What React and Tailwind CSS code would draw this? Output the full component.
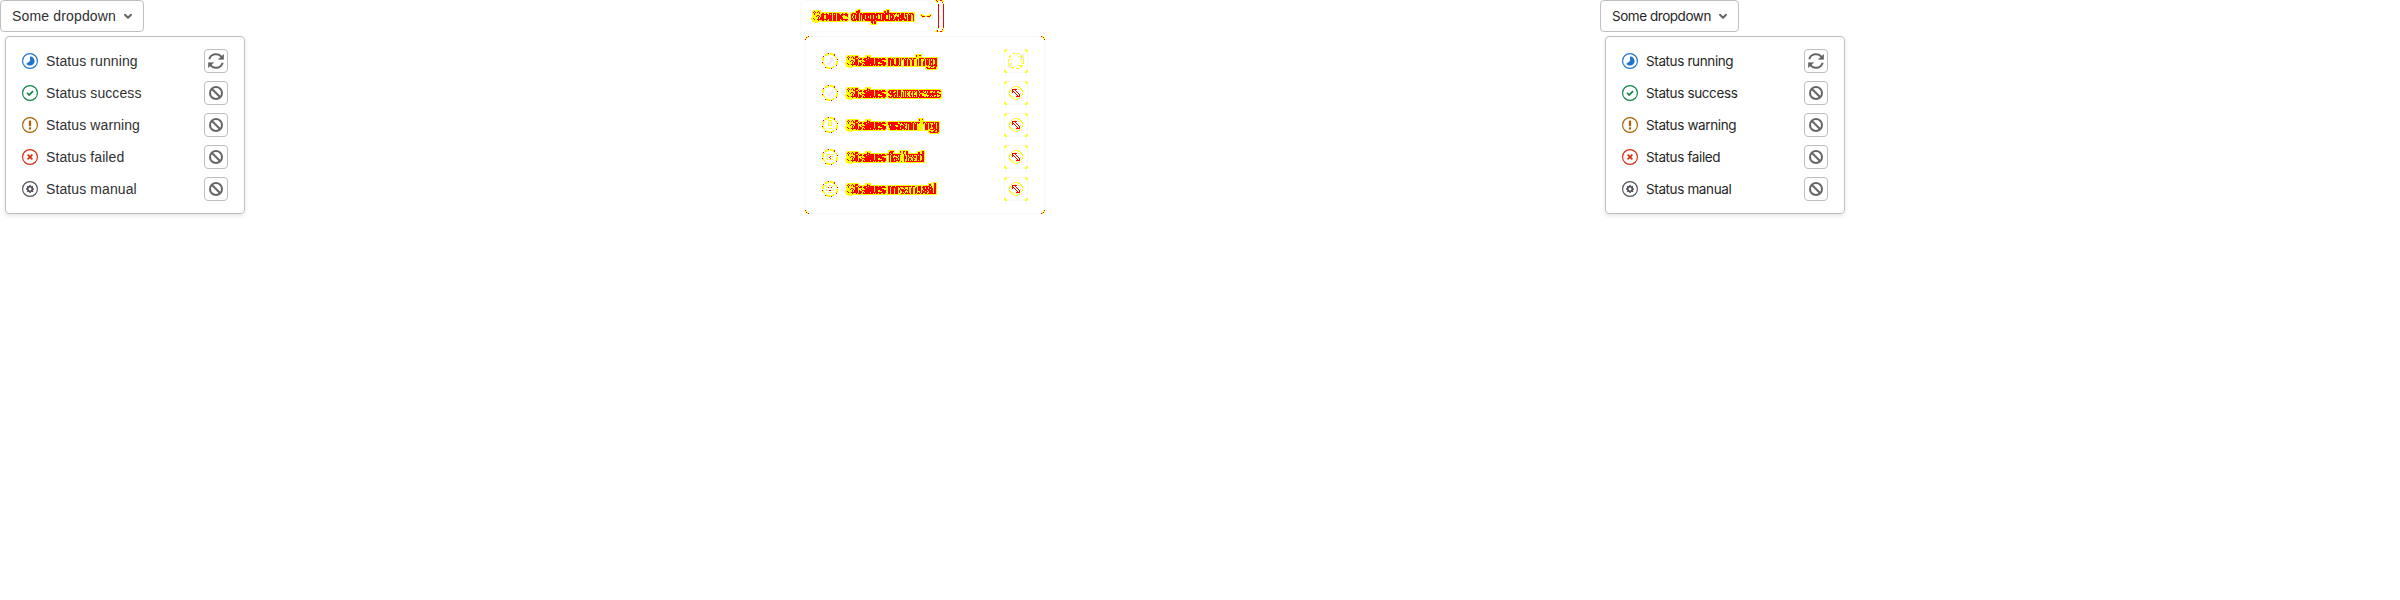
import React from "react";

const statuses = [
  { name: "running", color: "text-[#1f75cb]" },
  { name: "success", color: "text-[#108548]" },
  { name: "warning", color: "text-[#ab6100]" },
  { name: "failed", color: "text-[#dd2b0e]" },
  { name: "manual", color: "text-[#535158]" },
];

const liberation = "[font-family:'Liberation_Sans',sans-serif] tracking-[0.1px]";
const inter = "[font-family:'Inter',sans-serif] text-[13.5px] leading-4 tracking-[-0.38px]";

const glyphs = {
  running: "M7 3c2.2 0 4 1.8 4 4s-1.8 4-4 4c-1.3 0-2.5-.7-3.3-1.7L7 7V3",
  success:
    "M6.278 7.697L5.045 6.464a.296.296 0 0 0-.42-.002l-.613.614a.298.298 0 0 0 .002.42l1.91 1.909a.5.5 0 0 0 .703.005l.265-.265L9.997 6.04a.291.291 0 0 0-.009-.408l-.614-.614a.29.29 0 0 0-.408-.009L6.278 7.697z",
  warning:
    "M6 3.5c0-.3.2-.5.5-.5h1c.3 0 .5.2.5.5v4c0 .3-.2.5-.5.5h-1c-.3 0-.5-.2-.5-.5v-4m0 6c0-.3.2-.5.5-.5h1c.3 0 .5.2.5.5v1c0 .3-.2.5-.5.5h-1c-.3 0-.5-.2-.5-.5v-1",
  failed:
    "M7 5.969L5.599 4.568a.29.29 0 0 0-.413.004l-.614.614a.294.294 0 0 0-.004.413L5.968 7l-1.4 1.401a.29.29 0 0 0 .004.413l.614.614c.113.114.3.117.413.004L7 8.032l1.401 1.4a.29.29 0 0 0 .413-.004l.614-.614a.294.294 0 0 0 .004-.413L8.032 7l1.4-1.401a.29.29 0 0 0-.004-.413l-.614-.614a.294.294 0 0 0-.413-.004L7 5.968z",
  manual:
    "M10.5 7.63V6.37l-.787-.13c-.044-.175-.132-.349-.263-.61l.481-.652-.918-.913-.657.478a2.346 2.346 0 0 0-.612-.26L7.656 3.5H6.388l-.132.783c-.219.043-.394.13-.612.26l-.657-.478-.918.913.437.652c-.131.218-.175.392-.262.61l-.744.086v1.261l.787.13c.044.218.132.392.263.61l-.438.651.92.913.655-.434c.175.086.394.173.613.26l.131.783h1.313l.131-.783c.219-.043.394-.13.613-.26l.656.478.918-.913-.48-.652c.13-.218.218-.435.262-.61l.656-.13zM7 8.283a1.285 1.285 0 0 1-1.313-1.305c0-.739.57-1.304 1.313-1.304.744 0 1.313.565 1.313 1.304 0 .74-.57 1.305-1.313 1.305z",
};

function StatusIcon({ name, color }) {
  return (
    <svg viewBox="0 0 14 14" className={`h-4 w-4 shrink-0 ${color}`} fill="currentColor" fillRule="evenodd">
      <path d="M0 7a7 7 0 1 1 14 0A7 7 0 0 1 0 7zM13 7A6 6 0 1 0 1 7a6 6 0 0 0 12 0z" />
      <path d={glyphs[name]} />
    </svg>
  );
}

function ActionIcon({ retry }) {
  return retry ? (
    <svg viewBox="0 0 16 16" className="h-4 w-4 shrink-0" fill="none" stroke="#666" strokeWidth="2">
      <path d="M1.300 6.200A7 7 0 0 1 13.600 4M14.700 9.800A7 7 0 0 1 2.400 12" />
      <path d="M15.700 1.500V6.300h-5.200zM.3 14.500V9.700h5.200z" fill="#666" strokeWidth="0.600" />
    </svg>
  ) : (
    <svg viewBox="0 0 16 16" className="h-4 w-4 shrink-0" fill="none" stroke="#666" strokeWidth="2">
      <circle cx="8" cy="8" r="6" />
      <path d="M4 4l8 8" />
    </svg>
  );
}

function Chevron() {
  return (
    <svg viewBox="0 0 16 16" className="h-4 w-4 shrink-0" fill="none" stroke="#666" strokeWidth="2" strokeLinecap="round" strokeLinejoin="round">
      <path d="M5 6.700l3 3 3-3" />
    </svg>
  );
}

function Dropdown({ sans }) {
  return (
    <section className={`w-[800px] ${sans ? `text-sm leading-4 text-[#303030] ${liberation}` : `text-[#262626] ${inter}`}`}>
      <button className={`flex h-8 items-center justify-between rounded border border-[#bfbfbf] pr-[7px] pl-[11px] ${sans ? "w-36 tracking-[0.16px]" : "w-[139px] tracking-[-0.46px]"}`}>
        <span className="whitespace-nowrap">Some dropdown</span>
        <Chevron />
      </button>
      <ul className="mt-1 ml-[5px] flex h-[178px] w-60 flex-col rounded border border-[#bfbfbf] pt-2 pr-4 pl-4 shadow-[0_2px_4px_rgba(0,0,0,0.1)]">
        {statuses.map((s, i) => (
          <li key={s.name} className="flex h-8 shrink-0 items-center">
            <StatusIcon name={s.name} color={s.color} />
            <span className="ml-2 flex-1 whitespace-nowrap">Status {s.name}</span>
            <button className="flex h-6 w-6 items-center justify-center rounded border border-[#bfbfbf]">
              <ActionIcon retry={i === 0} />
            </button>
          </li>
        ))}
      </ul>
    </section>
  );
}

/* Paints strong differences red and faint ones yellow. */
function DiffFilter() {
  return (
    <svg className="absolute h-0 w-0" aria-hidden="true">
      <filter id="diff" colorInterpolationFilters="sRGB" x="0" y="0" width="1" height="1">
        <feColorMatrix in="SourceGraphic" type="matrix" values="0 0 0 0 0  0 0 0 0 0  0 0 0 0 0  .34 .33 .33 0 0" result="lum" />
        <feComponentTransfer in="lum" result="ink">
          <feFuncA type="discrete" tableValues="0 0 1 1 1 1 1 1" />
        </feComponentTransfer>
        <feMorphology in="ink" operator="dilate" radius="1" result="wide" />
        <feFlood floodColor="#ffff00" />
        <feComposite in2="wide" operator="in" result="yellow" />
        <feComponentTransfer in="lum" result="core">
          <feFuncA type="discrete" tableValues="0 0 0 1 1 1 1 1" />
        </feComponentTransfer>
        <feFlood floodColor="#ff0000" />
        <feComposite in2="core" operator="in" result="red" />
        <feMerge>
          <feMergeNode in="yellow" />
          <feMergeNode in="red" />
        </feMerge>
      </filter>
    </svg>
  );
}

function DiffText({ children }) {
  return (
    <span className="isolate grid bg-black px-0.5 py-1 whitespace-nowrap text-white [filter:url(#diff)]">
      <span className={`col-start-1 row-start-1 ${liberation}`}>{children}</span>
      <span aria-hidden="true" className={`col-start-1 row-start-1 mix-blend-difference ${inter}`}>{children}</span>
    </span>
  );
}

function DiffStatusIcon({ name }) {
  return (
    <svg viewBox="0 0 16 16" className="h-4 w-4 shrink-0" fill="none" shapeRendering="crispEdges">
      <circle cx="8" cy="8" r="7.200" stroke="#ff0" strokeWidth="1.600" strokeDasharray="4.450 1.200" />
      <circle cx="8" cy="8" r="7.500" stroke="#f00" strokeDasharray="1 4.900" strokeDashoffset="2" />
      {name === "running" && <path d="M8 4h3v5l-4 3H5V9l3-1z" fill="#eee" />}
      {name === "success" && <path d="M4.500 8l2.500 2 4-4" stroke="#eee" strokeWidth="2" />}
      {name === "warning" && <path d="M6.500 3.500h3v5h-3zM6.500 11.500h3" stroke="#ff0" />}
      {name === "failed" && (
        <>
          <path d="M5.500 5.500h5v5h-5z" stroke="#ff0" strokeDasharray="2 1" />
          <path d="M8 7h1v1H8zM7 8h1v1H7zM8 9h1v1H8z" fill="#f00" />
        </>
      )}
      {name === "manual" && (
        <>
          <circle cx="8" cy="8" r="3.500" stroke="#ff0" strokeDasharray="2 1" />
          <path d="M6 6.500h1M9 6.500h1M7 9.500h2" stroke="#f00" />
        </>
      )}
    </svg>
  );
}

function DiffAction({ retry }) {
  return (
    <svg viewBox="0 0 24 24" className="h-6 w-6 shrink-0" fill="none" shapeRendering="crispEdges">
      <rect x="0.500" y="0.500" width="23" height="23" rx="3" stroke="#f7f7f7" />
      <path
        d="M0 1h1v2H0zM1 0h2v1H1zM1 2h1v1H1zM2 1h1v1H2zM21 0h2v1h-2zM23 1h1v2h-1zM22 2h1v1h-1zM21 1h1v1h-1zM0 21h1v2H0zM1 23h2v1H1zM1 21h1v1H1zM2 22h1v1H2zM23 21h1v2h-1zM21 23h2v1h-2zM22 21h1v1h-1zM21 22h1v1h-1z"
        fill="#ff0"
      />
      {retry ? (
        <>
          <path d="M16 5h4v5h-4zM4 14h4v5H4z" fill="#eee" />
          <circle cx="12" cy="12" r="7.500" stroke="#ff0" strokeDasharray="3 1.500" />
          <circle cx="12" cy="12" r="5.500" stroke="#ff0" strokeDasharray="1.500 3" />
        </>
      ) : (
        <>
          <circle cx="12" cy="12" r="6.500" stroke="#ff0" strokeDasharray="3 1" />
          <circle cx="12" cy="12" r="4.500" stroke="#ff0" strokeDasharray="1 1.500" />
          <path
            d="M8 8h5v1H8zM8 9h1v3H8zM9 10h1v1H9zM11 9h1v1h-1zM12 10h1v1h-1zM13 11h1v1h-1zM14 12h1v1h-1zM15 13h1v3h-1zM10 11h1v1h-1zM11 12h1v1h-1zM12 13h1v1h-1zM13 14h1v1h-1zM12 16h3v-1h-3z"
            fill="#f00"
          />
        </>
      )}
    </svg>
  );
}

function DiffCorner({ place }) {
  return (
    <svg viewBox="0 0 4 4" className={`absolute h-1 w-1 ${place}`} shapeRendering="crispEdges">
      <path d="M0 3h1v1H0zM1 1h1v1H1zM3 0h1v1H3z" fill="#f00" />
      <path d="M0 2h1v1H0zM1 2h1v1H1zM2 0h1v2H2z" fill="#ff0" />
    </svg>
  );
}

function DiffDropdown() {
  return (
    <section className="w-[800px] text-sm leading-4">
      <div className="relative flex h-8 w-36 items-center rounded border border-[#f9f9f9] pl-[9px]">
        <DiffText>Some dropdown</DiffText>
        <svg viewBox="0 0 12 4" className="absolute top-[13px] left-[119px] h-1 w-3" fill="none" shapeRendering="crispEdges">
          <path d="M0 .5h3M0 1.500h5M7 1.500h5M9 .5h3M1 2.500h10M2 3.500h2M8 3.500h2" stroke="#ff0" />
          <path d="M1 1.500h1M2 2.500h3M7 2.500h3M10 1.500h1" stroke="#f00" />
        </svg>
        <svg viewBox="0 0 10 32" className="absolute -top-px left-[134px] h-8 w-[10px]" fill="none" shapeRendering="crispEdges">
          <path d="M3.500 4v24M8.500 4v24" stroke="#f00" />
          <path d="M0 .5h8M1 1.500h2M7 1.500h2M2 2.500h1M8 3.500h1M0 31.500h8M1 30.500h2M7 30.500h2M3 28.500h1M8 28.500h1" stroke="#ff0" />
          <path d="M1 .5h1M5 .5h2M2 1.500h1M7 2.500h1M2 31.500h1M5 31.500h2M2 30.500h1M7 29.500h1" stroke="#f00" />
        </svg>
      </div>
      <div className="relative mt-1 ml-[5px] h-[178px] w-60 rounded border border-[#f9f9f9] pt-2 pr-4 pl-4 shadow-[0_2px_4px_rgba(0,0,0,0.01)]">
        <DiffCorner place="-top-px -left-px" />
        <DiffCorner place="-top-px -right-px -scale-x-100" />
        <DiffCorner place="-bottom-px -left-px -scale-y-100" />
        <DiffCorner place="-right-px -bottom-px -scale-100" />
        {statuses.map((s, i) => (
          <div key={s.name} className="flex h-8 items-center justify-between">
            <div className="flex items-center gap-1.5">
              <DiffStatusIcon name={s.name} />
              <DiffText>Status {s.name}</DiffText>
            </div>
            <DiffAction retry={i === 0} />
          </div>
        ))}
      </div>
    </section>
  );
}

export default function App() {
  return (
    <main className="flex h-[600px] w-[2400px] overflow-hidden bg-white">
      <DiffFilter />
      <Dropdown sans />
      <DiffDropdown />
      <Dropdown />
    </main>
  );
}
